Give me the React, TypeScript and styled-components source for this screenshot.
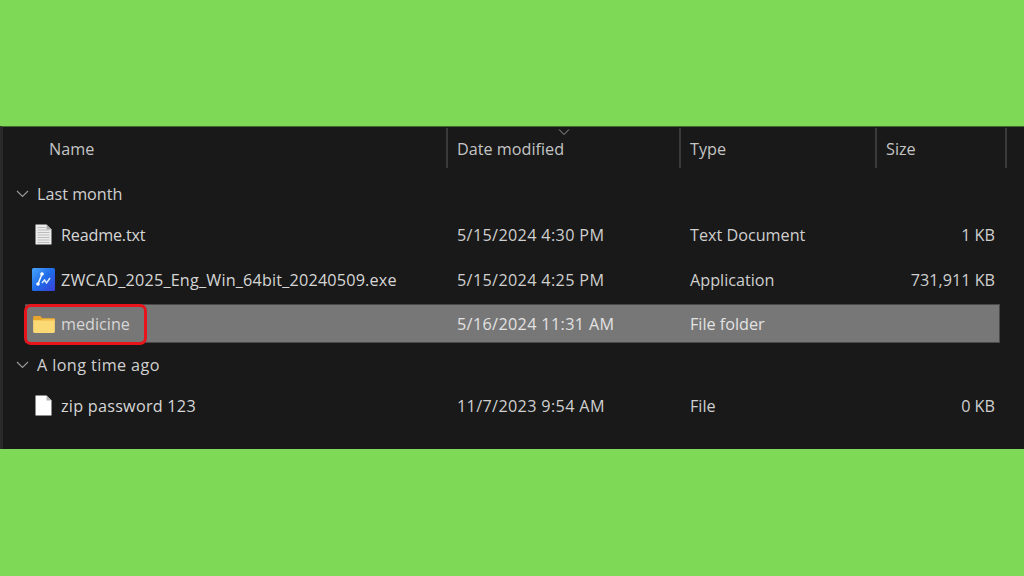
import React from 'react';
import styled, { createGlobalStyle, css } from 'styled-components';

const GlobalStyle = createGlobalStyle`
  html, body {
    margin: 0;
    padding: 0;
    background: #7ed957;
  }
  * {
    box-sizing: border-box;
  }
`;

const Page = styled.div`
  width: 1024px;
  height: 576px;
  overflow: hidden;
  display: flex;
  flex-direction: column;
  background: #7ed957;
  font-family: 'Open Sans', 'Noto Sans', sans-serif;
`;
const GreenBand = styled.div`
  height: 126px;
  flex: none;
`;
const Explorer = styled.div`
  height: 323px;
  flex: none;
  background: #191919;
  border-top: 1px solid #3f6b2c;
  border-left: 3px solid #2a2a2a;
  color: #d6d6d6;
  font-size: 16.2px;
`;
const HeaderRow = styled.div`
  display: grid;
  grid-template-columns: 445px 233px 196px 130px;
  height: 48px;
  padding-top: 1px;
`;
const HeaderCell = styled.div<{ $first?: boolean }>`
  position: relative;
  height: 40px;
  padding: 10px 0 0 9px;
  color: #c4c4c4;
  border-right: 2px solid #3a3a3a;
  ${(p) =>
    p.$first &&
    css`
      padding-left: 46px;
    `}
`;
const SortCaret = styled.svg`
  position: absolute;
  top: 1px;
  right: 109px;
  width: 12px;
  height: 6px;
`;
const GroupRow = styled.div<{ $tracking?: number }>`
  display: flex;
  align-items: center;
  height: 37px;
  padding-left: 13px;
  gap: 8px;
  color: #d0d0d0;
  letter-spacing: ${(p) => p.$tracking ?? 0}px;
`;
const Chevron = styled.svg`
  width: 13px;
  height: 8px;
  flex: none;
`;
const FileRow = styled.div<{ $selected?: boolean }>`
  position: relative;
  display: grid;
  grid-template-columns: 444px 233px 196px 119px;
  align-items: center;
  width: 997px;
  height: 45px;
  ${(p) =>
    p.$selected &&
    css`
      grid-template-columns: 421px 233px 196px 119px;
      width: 975px;
      height: 39px;
      margin: 2px 0 3px 22px;
      padding-top: 1px;
      background: #777777;
      border: 1px solid #4a4a4a;
    `}
`;
const NameCell = styled.div<{ $selected?: boolean; $tracking?: number }>`
  display: flex;
  align-items: center;
  gap: 6px;
  padding-left: ${(p) => (p.$selected ? '6px' : '29px')};
  letter-spacing: ${(p) => p.$tracking ?? 0}px;
  white-space: nowrap;
`;
const IconSlot = styled.span`
  display: flex;
  width: 23px;
  height: 23px;
  align-items: center;
  justify-content: center;
  flex: none;
`;
const DateCell = styled.div<{ $selected?: boolean }>`
  padding-left: 10px;
  color: ${(p) => (p.$selected ? '#e2e2e2' : '#cfcfcf')};
  letter-spacing: 0.35px;
  white-space: nowrap;
`;
const TypeCell = styled.div<{ $selected?: boolean }>`
  padding-left: 10px;
  color: ${(p) => (p.$selected ? '#e2e2e2' : '#cfcfcf')};
  white-space: nowrap;
`;
const SizeCell = styled.div`
  text-align: right;
  color: #cfcfcf;
  white-space: nowrap;
`;
const RedOutline = styled.div`
  position: absolute;
  left: -2px;
  top: -1px;
  width: 123px;
  height: 41px;
  border: 3px solid #e8141c;
  border-radius: 7px;
  pointer-events: none;
`;

const ChevronDown = () => (
  <Chevron viewBox="0 0 13 8">
    <path d="M1 1l5.5 5.5L12 1" fill="none" stroke="#9a9a9a" strokeWidth="1.1" />
  </Chevron>
);

const TextFileIcon = () => (
  <svg width="17" height="21" viewBox="0 0 17 21">
    <path d="M0.5 0.5h11l5 5v15h-16z" fill="#ececec" />
    <path d="M11.5 0.5v5h5z" fill="#a8a8a8" />
    <path d="M2.5 3.5h8M2.5 6h12M2.5 8.5h12M2.5 11h12M2.5 13.5h12M2.5 16h12M2.5 18.5h12" stroke="#bcbcbc" strokeWidth="1" />
  </svg>
);

const BlankFileIcon = () => (
  <svg width="17" height="21" viewBox="0 0 17 21">
    <path d="M0.5 0.5h11l5 5v15h-16z" fill="#ffffff" />
    <path d="M11.5 0.5v5h5z" fill="#b4b4b4" />
  </svg>
);

const AppIcon = () => (
  <svg width="23" height="23" viewBox="0 0 23 23">
    <defs>
      <linearGradient id="zw" x1="0" y1="0" x2="1" y2="1">
        <stop offset="0" stopColor="#4aa6fa" />
        <stop offset="0.5" stopColor="#1f6be8" />
        <stop offset="1" stopColor="#3a3fd6" />
      </linearGradient>
    </defs>
    <rect width="23" height="23" rx="1.5" fill="url(#zw)" />
    <path d="M6 16L10 6" stroke="#ffffff" strokeWidth="1.4" fill="none" />
    <circle cx="6" cy="16" r="1.8" fill="#ffffff" />
    <circle cx="10" cy="6" r="1.8" fill="#ffffff" />
    <path d="M10 15l2.5-3 2 3 3.5-5" stroke="#dcecff" strokeWidth="1.5" fill="none" />
  </svg>
);

const FolderIcon = () => (
  <svg width="22" height="17" viewBox="0 0 23 18">
    <path d="M0 1.5A1.5 1.5 0 0 1 1.5 0h6l2.5 2.5h11.5A1.5 1.5 0 0 1 23 4v2H0z" fill="#e6a52c" />
    <path d="M0 4.5h23v12A1.5 1.5 0 0 1 21.5 18h-20A1.5 1.5 0 0 1 0 16.5z" fill="#fbd974" />
    <path d="M0 4.5h8l2-1.5h13v1.5z" fill="#f2bd4a" />
  </svg>
);

type FileItem = {
  name: string;
  date: string;
  type: string;
  size: string;
  icon: React.ReactNode;
  selected?: boolean;
  tracking?: number;
};

const lastMonth: FileItem[] = [
  {
    name: 'Readme.txt',
    date: '5/15/2024 4:30 PM',
    type: 'Text Document',
    size: '1 KB',
    icon: <TextFileIcon />,
    tracking: -0.2,
  },
  {
    name: 'ZWCAD_2025_Eng_Win_64bit_20240509.exe',
    date: '5/15/2024 4:25 PM',
    type: 'Application',
    size: '731,911 KB',
    icon: <AppIcon />,
    tracking: 0.19,
  },
  { name: 'medicine', date: '5/16/2024 11:31 AM', type: 'File folder', size: '', icon: <FolderIcon />, selected: true },
];

const longAgo: FileItem[] = [
  {
    name: 'zip password 123',
    date: '11/7/2023 9:54 AM',
    type: 'File',
    size: '0 KB',
    icon: <BlankFileIcon />,
    tracking: 0.25,
  },
];

const Row = ({ item }: { item: FileItem }) => (
  <FileRow $selected={item.selected}>
    <NameCell $selected={item.selected} $tracking={item.tracking}>
      <IconSlot>{item.icon}</IconSlot>
      {item.name}
    </NameCell>
    <DateCell $selected={item.selected}>{item.date}</DateCell>
    <TypeCell $selected={item.selected}>{item.type}</TypeCell>
    <SizeCell>{item.size}</SizeCell>
    {item.selected && <RedOutline />}
  </FileRow>
);

export default function App() {
  return (
    <Page>
      <GlobalStyle />
      <GreenBand />
      <Explorer>
        <HeaderRow>
          <HeaderCell $first>Name</HeaderCell>
          <HeaderCell>
            <SortCaret viewBox="0 0 12 6">
              <path d="M1 0.5l5 5 5-5" fill="none" stroke="#9a9a9a" strokeWidth="1" />
            </SortCaret>
            Date modified
          </HeaderCell>
          <HeaderCell>Type</HeaderCell>
          <HeaderCell>Size</HeaderCell>
        </HeaderRow>
        <GroupRow>
          <ChevronDown />
          Last month
        </GroupRow>
        {lastMonth.map((item) => (
          <Row key={item.name} item={item} />
        ))}
        <GroupRow $tracking={0.4}>
          <ChevronDown />
          A long time ago
        </GroupRow>
        {longAgo.map((item) => (
          <Row key={item.name} item={item} />
        ))}
      </Explorer>
    </Page>
  );
}
